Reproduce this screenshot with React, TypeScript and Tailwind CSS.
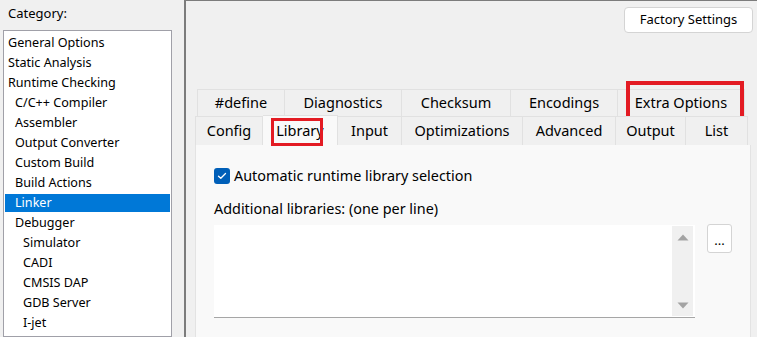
import React from "react";

const items: [string, number, boolean?][] = [
  ["General Options", 0],
  ["Static Analysis", 0],
  ["Runtime Checking", 0],
  ["C/C++ Compiler", 1],
  ["Assembler", 1],
  ["Output Converter", 1],
  ["Custom Build", 1],
  ["Build Actions", 1],
  ["Linker", 1, true],
  ["Debugger", 1],
  ["Simulator", 2],
  ["CADI", 2],
  ["CMSIS DAP", 2],
  ["GDB Server", 2],
  ["I-jet", 2],
];

const row1: [string, number][] = [
  ["#define", 88],
  ["Diagnostics", 117],
  ["Checksum", 109],
  ["Encodings", 107],
  ["Extra Options", 127],
];

const row2: [string, number][] = [
  ["Config", 68],
  ["Library", 75],
  ["Input", 64],
  ["Optimizations", 121],
  ["Advanced", 93],
  ["Output", 70],
  ["List", 62],
];

export default function App() {
  return (
    <div className="w-[757px] h-[337px] overflow-hidden bg-[#f0f0f0] flex text-black font-['Noto_Sans',sans-serif]">
      {/* Left: category list */}
      <div className="w-[184px] shrink-0 pl-[3px] flex flex-col">
        <div className="h-[30px] pl-[5px] text-[13px] leading-[26px]">Category:</div>
        <div className="w-[169px] flex-1 bg-white border border-[#a0a0a8] pt-[2px] px-[1px] overflow-hidden">
          {items.map(([label, level, sel]) => (
            <div key={label} className="h-[20px] py-[1px]">
              <div
                className={
                  "h-[18px] flex items-center text-[12.6px] " +
                  (sel ? "bg-[#0078d7] text-white " : "") +
                  (level === 0 ? "pl-[3px]" : level === 1 ? "pl-[10px]" : "pl-[18px]")
                }
              >
                {label}
              </div>
            </div>
          ))}
        </div>
      </div>

      {/* Right panel */}
      <div className="flex-1 border-l-2 border-t border-[#7c7c7c] flex flex-col pl-[9px] pr-[6px]">
        <div className="h-[88px] flex justify-end pt-[6px]">
          <div className="-mr-[2px] w-[129px] h-[26px] bg-white border border-[#d4d4d4] rounded-[4px] flex items-center justify-center text-[13px]">
            Factory Settings
          </div>
        </div>

        {/* Tabs row 1 */}
        <div className="h-[27px] flex ml-[2px]">
          {row1.map(([label, w], i) => (
            <div
              key={label}
              style={{ width: w }}
              className={
                "relative h-full flex items-center justify-center text-[14.5px] bg-[#f0f0f0] border-t border-r border-[#e1e1e1] " +
                (i === 0 ? "border-l" : "")
              }
            >
              {label}
              {label === "Extra Options" && (
                <div className="absolute left-[8px] top-[-9px] w-[118px] h-[39px] border-[4px] border-[#e31b23]" />
              )}
            </div>
          ))}
        </div>

        {/* Tabs row 2 */}
        <div className="h-[29px] flex items-end">
          {row2.map(([label, w], i) => {
            const sel = label === "Library";
            return (
              <div
                key={label}
                style={{ width: w }}
                className={
                  "relative flex items-center justify-center text-[14.5px] border-t border-r border-[#e1e1e1] " +
                  (sel ? "h-[30px] bg-[#f9f9f9] z-10 -mt-[1px] " : "h-[29px] bg-[#f0f0f0] ") +
                  (i === 0 ? "border-l" : "")
                }
              >
                {label}
                {sel && (
                  <div className="absolute left-[8px] top-[2px] w-[52px] h-[28px] border-[3px] border-[#e31b23]" />
                )}
              </div>
            );
          })}
        </div>

        {/* Tab content */}
        <div className="flex-1 bg-[#f9f9f9] border-l border-r border-[#e3e3e3] pt-[22px] pl-[18px]">
          <div className="h-[18px] flex items-center gap-[4px]">
            <div className="w-[16px] h-[16px] rounded-[3px] bg-[#005fb8] flex items-center justify-center">
              <svg width="10" height="8" viewBox="0 0 10 8">
                <path d="M1.5 4.2 L3.8 6.3 L8.5 1.5" fill="none" stroke="white" strokeWidth="1.3" strokeLinecap="round" strokeLinejoin="round" />
              </svg>
            </div>
            <span className="text-[14.4px] leading-[18px]">Automatic runtime library selection</span>
          </div>
          <div className="mt-[14px] h-[20px] text-[14.4px] leading-[20px]">Additional libraries: (one per line)</div>
          <div className="mt-[6px] flex items-start gap-[12px]">
            <div className="w-[481px] h-[93px] bg-white border-b border-[#a6a6a6] flex justify-end">
              <div className="w-[21px] mr-[2px] my-[1px] bg-[#f0f0f0] flex flex-col items-center justify-between pt-[8px] pb-[7px]">
                <svg width="12" height="7" viewBox="0 0 12 7">
                  <path d="M6 0.5 L11.5 6.5 L0.5 6.5 Z" fill="#a3a3a3" />
                </svg>
                <svg width="12" height="7" viewBox="0 0 12 7">
                  <path d="M0.5 0.5 L11.5 0.5 L6 6.5 Z" fill="#a3a3a3" />
                </svg>
              </div>
            </div>
            <div className="-mt-[1px] w-[25px] h-[29px] bg-white border border-[#d4d4d4] rounded-[3px] flex items-center justify-center text-[13px] leading-none pt-[3px]">
              ...
            </div>
          </div>
        </div>
      </div>
    </div>
  );
}
